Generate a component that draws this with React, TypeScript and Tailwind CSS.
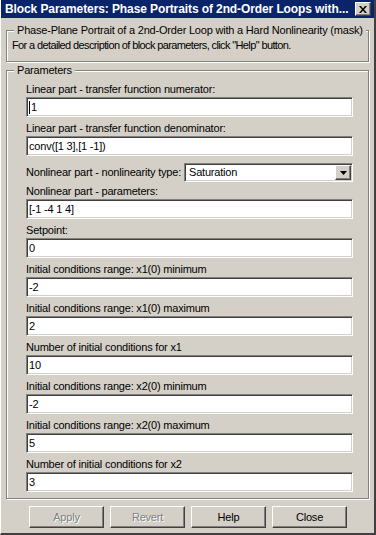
import React from 'react'

// Win2k style block parameter dialog

const font = "font-['Liberation_Sans',Arial,sans-serif]"

function Field({ label, value, caret, labelH = 'h-[19px]' }: { label: string; value: string; caret?: boolean; labelH?: string }) {
    return (
        <div>
            <div className={`${labelH} flex items-end leading-[13px] pb-[1px] whitespace-nowrap`}>{label}</div>
            <div className="h-[20px] w-[327px] bg-white border border-t-[#808080] border-l-[#808080] border-b-white border-r-white shadow-[inset_1px_1px_0_#404040,inset_-1px_-1px_0_#d4d0c8] flex items-center pl-[2px] leading-[13px]">
                {caret && <span className="inline-block w-[1px] h-[13px] bg-black mr-[1px]" />}
                {value}
            </div>
        </div>
    )
}

function Button({ label, disabled }: { label: string; disabled?: boolean }) {
    return (
        <div
            className={`w-[75px] h-[22px] flex items-center justify-center border border-t-white border-l-white border-b-[#404040] border-r-[#404040] shadow-[inset_-1px_-1px_0_#808080] leading-[13px] ${
                disabled ? 'text-[#808080] [text-shadow:1px_1px_0_#ffffff]' : 'text-black'
            }`}
        >
            {label}
        </div>
    )
}

export default function App() {
    const rows: [string, string][] = [
        ['Setpoint:', '0'],
        ['Initial conditions range: x1(0) minimum', '-2'],
        ['Initial conditions range: x1(0) maximum', '2'],
        ['Number of initial conditions for x1', '10'],
        ['Initial conditions range: x2(0) minimum', '-2'],
        ['Initial conditions range: x2(0) maximum', '5'],
        ['Number of initial conditions for x2', '3'],
    ]

    return (
        <div className={`w-[376px] h-[535px] bg-[#d4d0c8] text-[11px] tracking-[-0.2px] text-black ${font} border-r-2 border-r-[#404040] border-b-2 border-b-[#404040] border-l border-l-white overflow-hidden`}>
            {/* title bar */}
            <div className="h-[18px] bg-[#0a246a] flex items-center pl-[5px] pr-[3px] -ml-[1px]">
                <span className="text-white font-bold text-[12px] tracking-[-0.1px] leading-[14px] whitespace-nowrap flex-1">
                    Block Parameters: Phase Portraits of 2nd-Order Loops with...
                </span>
                <div className="w-[16px] h-[14px] bg-[#d4d0c8] border border-t-white border-l-white border-b-[#404040] border-r-[#404040] shadow-[inset_-1px_-1px_0_#808080] flex items-center justify-center">
                    <svg width="8" height="7" viewBox="0 0 8 7">
                        <path d="M0 0h2l2 2.5L6 0h2L5 3.5 8 7H6L4 4.5 2 7H0l3-3.5z" fill="#000" />
                    </svg>
                </div>
            </div>

            {/* description group */}
            <div className="relative ml-[5px] mt-[12px] w-[363px] h-[32px] border border-[#808080] shadow-[inset_1px_1px_0_#ffffff,1px_1px_0_#ffffff] pt-[8px] pl-[5px]">
                <div className="absolute -top-[7px] left-[7px] px-[3px] bg-[#d4d0c8] leading-[13px] whitespace-nowrap">
                    Phase-Plane Portrait of a 2nd-Order Loop with a Hard Nonlinearity (mask)
                </div>
                <div className="leading-[13px] whitespace-nowrap tracking-[-0.62px]">
                    For a detailed description of block parameters, click "Help" button.
                </div>
            </div>

            {/* parameters group */}
            <div className="relative ml-[5px] mt-[8px] w-[363px] border border-[#808080] shadow-[inset_1px_1px_0_#ffffff,1px_1px_0_#ffffff] pt-[7px] pb-[6px] pl-[19px]">
                <div className="absolute -top-[7px] left-[7px] px-[3px] bg-[#d4d0c8] leading-[13px]">Parameters</div>

                <Field label="Linear part - transfer function numerator:" value="1" caret />
                <Field label="Linear part - transfer function denominator:" value="conv([1 3],[1 -1])" />

                <div className="mt-[7px] h-[19px] w-[327px] flex items-center">
                    <span className="flex-1 leading-[13px] whitespace-nowrap">Nonlinear part - nonlinearity type:</span>
                    <div className="w-[169px] h-[19px] bg-white border border-t-[#808080] border-l-[#808080] border-b-white border-r-white shadow-[inset_1px_1px_0_#404040,inset_-1px_-1px_0_#d4d0c8] flex items-center pl-[4px] pr-[1px] leading-[13px]">
                        <span className="flex-1">Saturation</span>
                        <div className="w-[16px] h-[15px] bg-[#d4d0c8] border border-t-white border-l-white border-b-[#404040] border-r-[#404040] shadow-[inset_-1px_-1px_0_#808080] flex items-center justify-center">
                            <svg width="7" height="4" viewBox="0 0 7 4">
                                <path d="M0 0h7L3.5 4z" fill="#000" />
                            </svg>
                        </div>
                    </div>
                </div>

                <Field label="Nonlinear part - parameters:" value="[-1 -4 1 4]" labelH="h-[17px]" />
                {rows.map(([label, value]) => (
                    <Field key={label} label={label} value={value} />
                ))}
            </div>

            {/* buttons */}
            <div className="mt-[7px] pl-[28px] flex gap-[6px]">
                <Button label="Apply" disabled />
                <Button label="Revert" disabled />
                <Button label="Help" />
                <Button label="Close" />
            </div>
        </div>
    )
}
